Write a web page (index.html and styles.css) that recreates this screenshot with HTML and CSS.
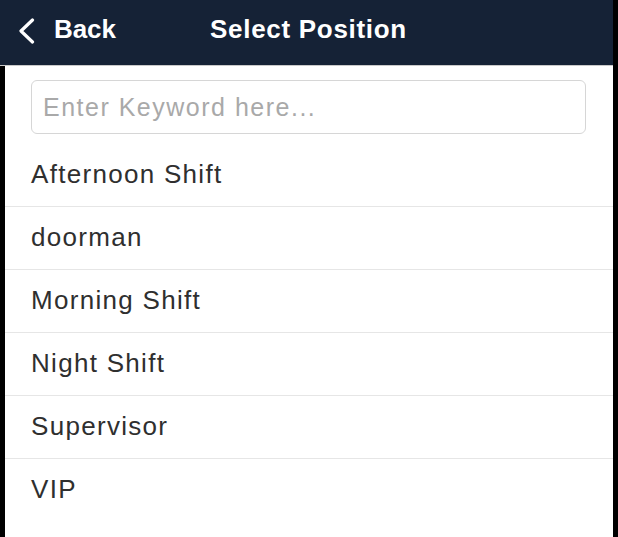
FILE: index.html
```html
<!DOCTYPE html>
<html lang="en">
<head>
<meta charset="utf-8">
<title>Select Position</title>
<link rel="stylesheet" href="styles.css">
</head>
<body>
<div class="app">
  <header class="topbar">
    <a class="back" href="#">
      <svg class="chev" width="18" height="26" viewBox="0 0 18 26" aria-hidden="true">
        <polyline points="14.5,2 3,13 14.5,24" fill="none" stroke="#ffffff" stroke-width="3.2" stroke-linecap="round" stroke-linejoin="round"/>
      </svg>
      <span class="back-label">Back</span>
    </a>
    <h1 class="title">Select Position</h1>
  </header>
  <main class="content">
    <div class="search">
      <input class="search-input" type="text" placeholder="Enter Keyword here...">
    </div>
    <ul class="list">
      <li class="item">Afternoon Shift</li>
      <li class="item">doorman</li>
      <li class="item">Morning Shift</li>
      <li class="item">Night Shift</li>
      <li class="item">Supervisor</li>
      <li class="item">VIP</li>
    </ul>
  </main>
</div>
</body>
</html>
```

FILE: styles.css
```css
* { box-sizing: border-box; }
html, body { margin: 0; padding: 0; }
body {
  background: #000;
  font-family: "Liberation Sans", Arial, Helvetica, sans-serif;
  min-height: 100vh;
}
.app {
  width: 613px;
  min-height: 100vh;
  display: flex;
  flex-direction: column;
}
.topbar {
  position: relative;
  height: 66px;
  background: #152236;
  border-bottom: 1px solid #c9c9c9;
  display: flex;
  align-items: center;
  padding: 0 0 6px 18px;
}
.back {
  display: flex;
  align-items: center;
  gap: 18px;
  color: #fff;
  text-decoration: none;
}
.chev { display: block; margin-top: 2px; }
.back-label {
  font-size: 26px;
  font-weight: 700;
  letter-spacing: -0.1px;
}
.title {
  position: absolute;
  left: 0;
  right: 0;
  top: 0;
  bottom: 6px;
  margin: 0;
  display: flex;
  align-items: center;
  justify-content: center;
  padding-left: 4px;
  color: #fff;
  font-size: 26px;
  font-weight: 700;
  letter-spacing: 0.7px;
  pointer-events: none;
}
.content {
  flex: 1;
  margin-left: 5px;
  background: #fff;
}
.search {
  padding: 14px 27px 10px 26px;
}
.search-input {
  display: block;
  width: 100%;
  height: 54px;
  border: 1.5px solid #d6d6d6;
  border-radius: 6px;
  padding: 0 11px;
  font-family: "Liberation Sans", Arial, Helvetica, sans-serif;
  font-size: 25px;
  letter-spacing: 1.5px;
  color: #333;
  outline: none;
  background: #fff;
}
.search-input::placeholder { color: #a9a9a9; }
.list {
  list-style: none;
  margin: 0;
  padding: 0;
}
.item {
  height: 63px;
  display: flex;
  align-items: center;
  padding: 0 0 2px 26px;
  border-bottom: 1.5px solid #e6e6e6;
  color: #2f2f2f;
  font-size: 26px;
  letter-spacing: 1.3px;
}
.item:last-child { border-bottom: none; }
```
